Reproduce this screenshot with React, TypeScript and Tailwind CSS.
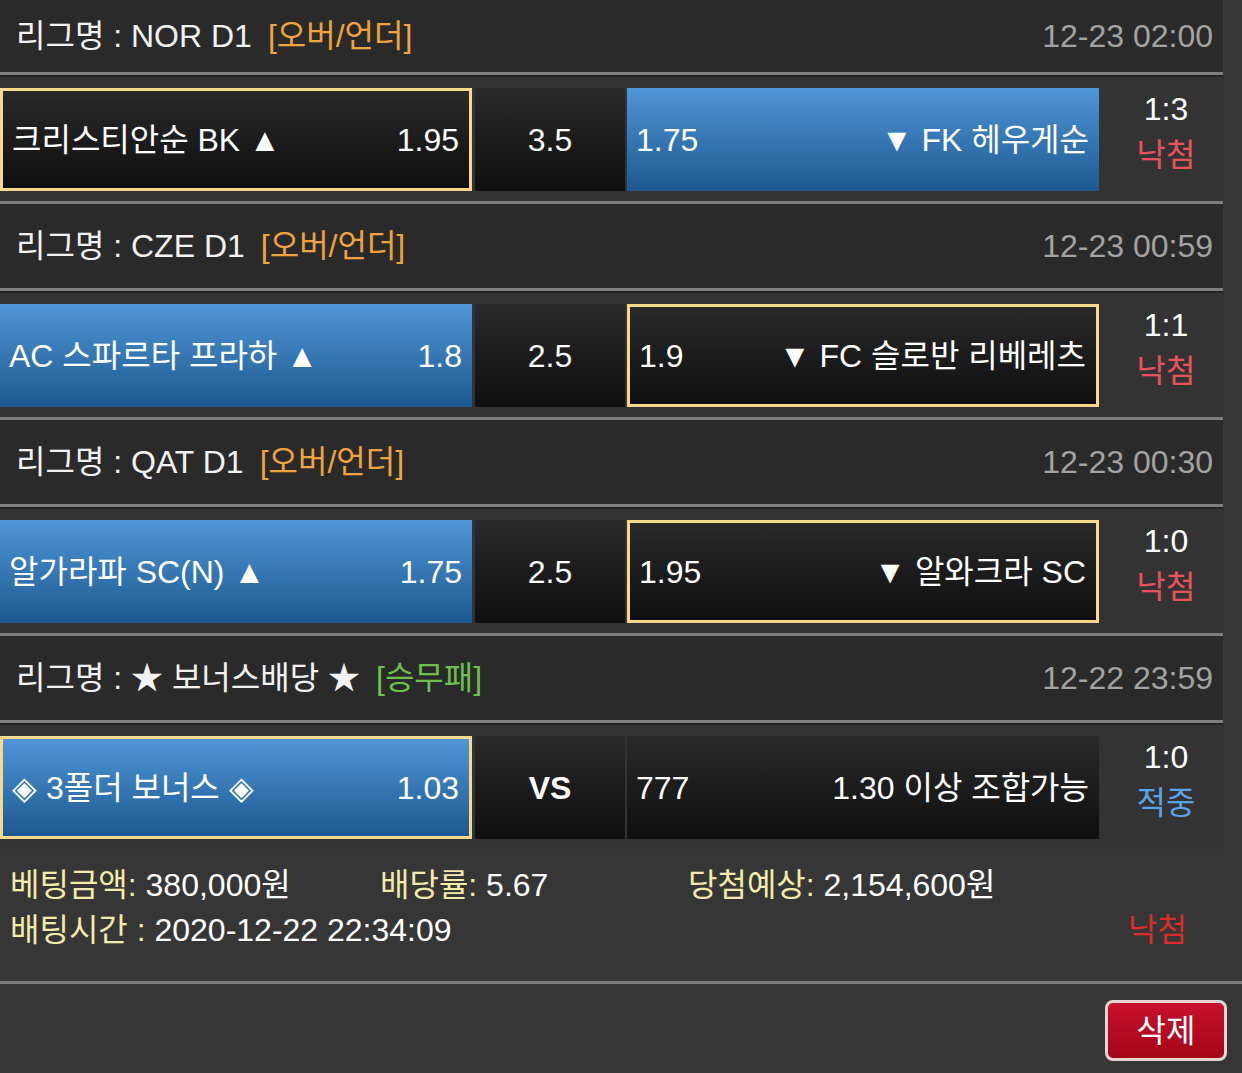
import React from "react";

type Side = {
  name: string;
  odds: string;
  selected?: boolean;
  blue?: boolean;
};

type Match = {
  league: string;
  tag: string;
  tagColor: string;
  time: string;
  home: Side;
  mid: string;
  away: Side;
  score: string;
  result: string;
  resultColor: string;
  first?: boolean;
};

const matches: Match[] = [
  {
    league: "리그명 : NOR D1",
    tag: "[오버/언더]",
    tagColor: "text-[#f0a33e]",
    time: "12-23 02:00",
    home: { name: "크리스티안순 BK ▲", odds: "1.95", selected: true },
    mid: "3.5",
    away: { name: "▼ FK 헤우게순", odds: "1.75", blue: true },
    score: "1:3",
    result: "낙첨",
    resultColor: "text-[#e8535a]",
    first: true,
  },
  {
    league: "리그명 : CZE D1",
    tag: "[오버/언더]",
    tagColor: "text-[#f0a33e]",
    time: "12-23 00:59",
    home: { name: "AC 스파르타 프라하 ▲", odds: "1.8", blue: true },
    mid: "2.5",
    away: { name: "▼ FC 슬로반 리베레츠", odds: "1.9", selected: true },
    score: "1:1",
    result: "낙첨",
    resultColor: "text-[#e8535a]",
  },
  {
    league: "리그명 : QAT D1",
    tag: "[오버/언더]",
    tagColor: "text-[#f0a33e]",
    time: "12-23 00:30",
    home: { name: "알가라파 SC(N) ▲", odds: "1.75", blue: true },
    mid: "2.5",
    away: { name: "▼ 알와크라 SC", odds: "1.95", selected: true },
    score: "1:0",
    result: "낙첨",
    resultColor: "text-[#e8535a]",
  },
  {
    league: "리그명 : ★ 보너스배당 ★",
    tag: "[승무패]",
    tagColor: "text-[#6cc14c]",
    time: "12-22 23:59",
    home: { name: "◈ 3폴더 보너스 ◈", odds: "1.03", blue: true, selected: true },
    mid: "VS",
    away: { name: "1.30 이상 조합가능", odds: "777" },
    score: "1:0",
    result: "적중",
    resultColor: "text-[#5aa3e6]",
  },
];

function cellClass(side: Side) {
  const bg = side.blue
    ? "bg-gradient-to-b from-[#4f96d8] to-[#1c5990]"
    : "bg-gradient-to-b from-[#2a2a2a] to-[#0f0f0f]";
  const border = side.selected ? "border-[3px] border-[#f6d98c]" : "";
  return `${bg} ${border} w-[472px] h-full flex items-center justify-between pl-[9px] pr-[10px]`;
}

function MatchBlock({ m, last }: { m: Match; last: boolean }) {
  return (
    <div>
      <div
        className={`${m.first ? "h-[72px]" : "h-[84px]"} bg-[#2a2a2a] flex items-center justify-between pl-4 pr-[10px]`}
      >
        <div className="text-[#f2f2f2]">
          {m.league}
          <span className={`${m.tagColor} ml-4`}>{m.tag}</span>
        </div>
        <div className="text-[#a3a3a3]">{m.time}</div>
      </div>
      <div className="h-[3px] bg-[#7d7d7d]" />
      <div className="h-[126px] bg-[#333333] border-t-2 border-[#232323] flex pt-[11px] pb-[10px]">
        <div className={cellClass(m.home)}>
          <span>{m.home.name}</span>
          <span>{m.home.odds}</span>
        </div>
        <div className="ml-[3px] w-[150px] h-full bg-gradient-to-b from-[#2a2a2a] to-[#0f0f0f] flex items-center justify-center">
          <span className={m.mid === "VS" ? "font-bold" : ""}>{m.mid}</span>
        </div>
        <div className="w-[2px]" />
        <div className={cellClass(m.away)}>
          <span>{m.away.odds}</span>
          <span>{m.away.name}</span>
        </div>
        <div className="flex-1 flex flex-col items-center justify-center pl-[10px] leading-[46px] -mt-[15px]">
          <span>{m.score}</span>
          <span className={m.resultColor}>{m.result}</span>
        </div>
      </div>
      {!last && <div className="h-[3px] bg-[#7d7d7d]" />}
    </div>
  );
}

export default function App() {
  return (
    <div
      className="min-h-screen bg-[#363636] text-white text-[32px] leading-none"
      style={{ fontFamily: '"Liberation Sans", Arial, "Noto Sans CJK KR", sans-serif' }}
    >
      <div className="w-[1223px] bg-[#333333]">
        {matches.map((m, i) => (
          <MatchBlock key={i} m={m} last={i === matches.length - 1} />
        ))}
      </div>
      <div className="h-[132px] pl-[10px] pr-[55px] pt-[20px]">
        <div className="flex items-center h-[32px]">
          <div className="w-[370px]">
            <span className="text-[#f3eba9]">베팅금액:</span> 380,000원
          </div>
          <div className="w-[308px]">
            <span className="text-[#f3eba9]">배당률:</span> 5.67
          </div>
          <div>
            <span className="text-[#f3eba9]">당첨예상:</span> 2,154,600원
          </div>
        </div>
        <div className="flex items-center justify-between h-[32px] mt-[13px]">
          <div>
            <span className="text-[#f3eba9]">배팅시간 :</span> 2020-12-22 22:34:09
          </div>
          <span className="text-[#dc2e28]">낙첨</span>
        </div>
      </div>
      <div className="h-[3px] bg-[#7d7d7d]" />
      <div className="flex justify-end pr-[15px] pt-[16px]">
        <button className="w-[122px] h-[61px] rounded-lg border-[3px] border-[#e8d6d6] bg-gradient-to-b from-[#c8102c] to-[#a3061a] text-white text-[32px] flex items-center justify-center">
          삭제
        </button>
      </div>
    </div>
  );
}
